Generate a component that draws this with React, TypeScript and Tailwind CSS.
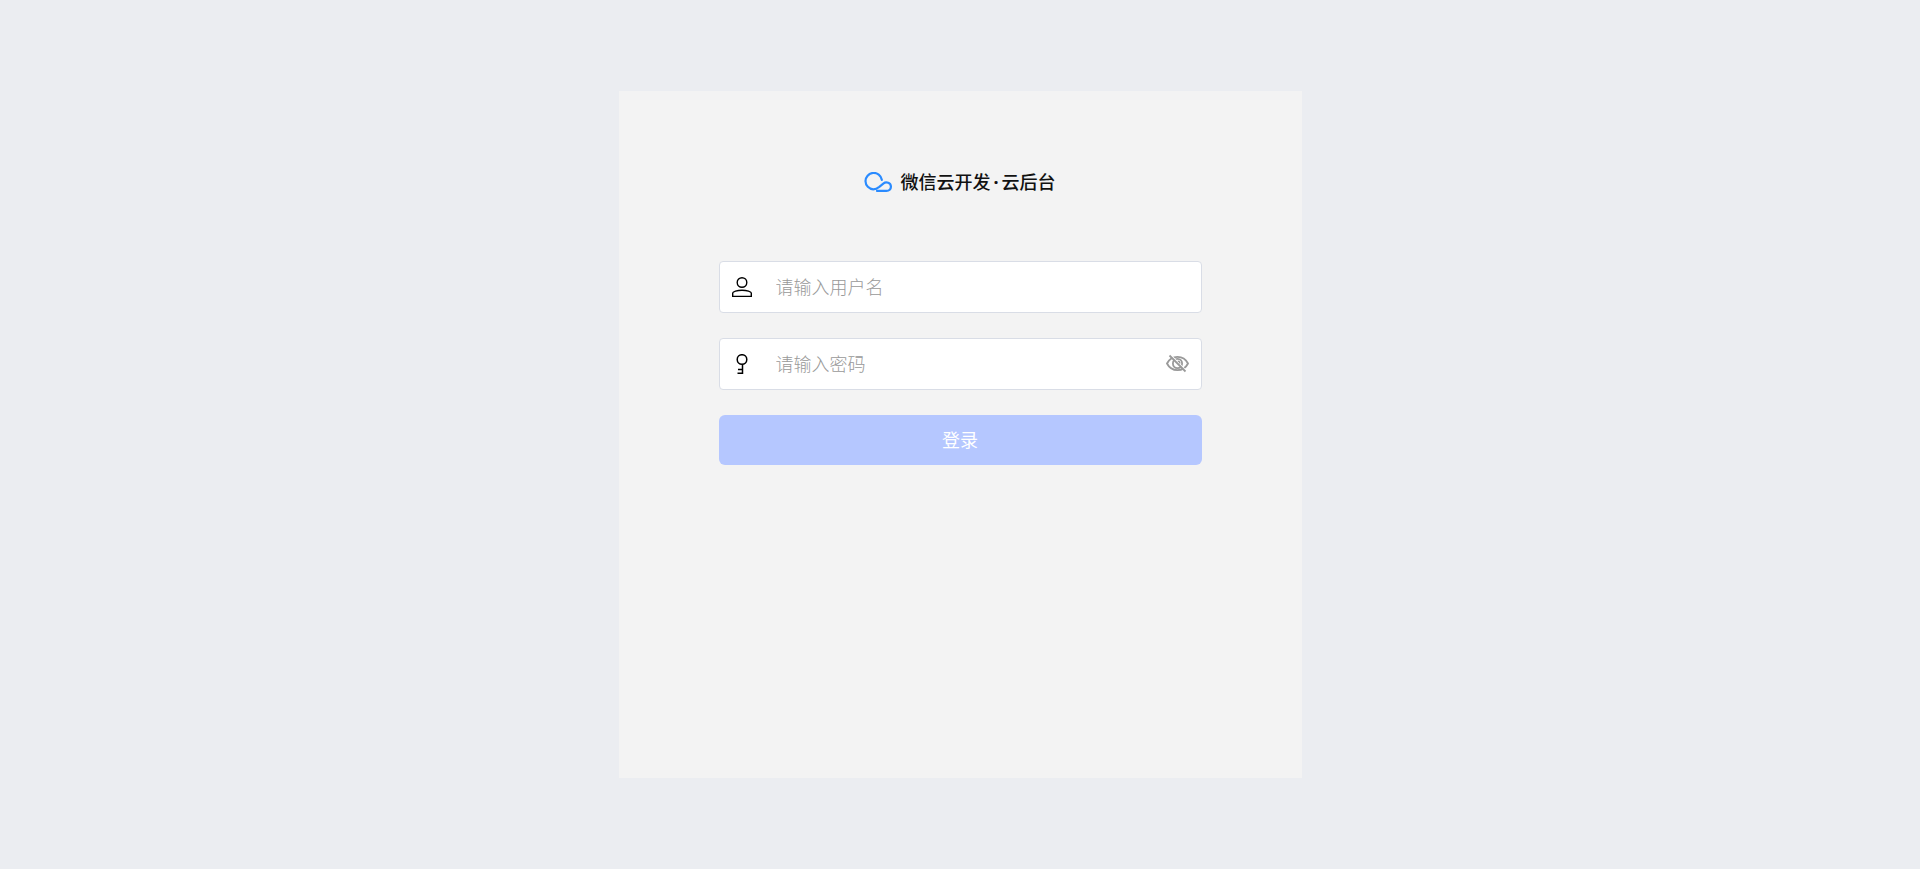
import React, { useState } from 'react';
import { clsx } from 'clsx';

const CloudLogo = () => (
  <svg
    className="h-5 w-7 flex-shrink-0"
    viewBox="0 0 28 20"
    fill="none"
    stroke="#2a8bff"
    strokeWidth="2.2"
    strokeLinecap="round"
    strokeLinejoin="round"
    aria-hidden="true"
  >
    <path d="M17.8 7.8A8.200 8.200 0 1 0 9.300 17.300c2.600 0 4.200-1 6-2.400l4-3.300c3-2.300 7.600-.8 7.600 3 .1 2.700-1.700 4.300-4.500 4.300H13" />
  </svg>
);

const UserIcon = () => (
  <svg
    className="size-5"
    viewBox="0 0 20 20"
    fill="none"
    stroke="#000"
    strokeWidth="1.400"
    aria-hidden="true"
  >
    <circle cx="10" cy="5.500" r="4.800" />
    <path d="M.7 19.500v-3.500c0-1.200 4.300-2.800 9.300-2.800s9.300 1.600 9.300 2.800v3.500z" />
  </svg>
);

const KeyIcon = () => (
  <svg
    className="size-5"
    viewBox="0 0 20 20"
    fill="none"
    stroke="#000"
    strokeWidth="1.500"
    aria-hidden="true"
  >
    <circle cx="10" cy="5.500" r="4.800" />
    <path d="M10.500 10.300v9H5.500M10.500 15.500H6" />
  </svg>
);

const EyeIcon = ({ hidden }: { hidden: boolean }) => (
  <svg
    className="size-6"
    viewBox="0 0 24 24"
    fill="none"
    stroke="#999"
    strokeWidth="1.800"
    aria-hidden="true"
  >
    <path d="M2 11.500C4.200 7.200 8 4.900 12.500 4.900S20.800 7.200 23 11.500C20.800 15.800 17 18.100 12.500 18.100S4.200 15.800 2 11.500z" />
    <circle cx="12.500" cy="11.500" r="4.600" />
    {!hidden && <circle cx="12.500" cy="11.500" r="1.500" />}
    {hidden && (
      <>
        <path d="M6.200 3.500 22 19.300" stroke="#fff" strokeWidth="1.200" />
        <path d="M4.500 3.500 20.500 19.500" />
        <path d="M12.800 9.200A2.300 2.300 0 0 1 14.900 11.500" strokeWidth="1.300" />
      </>
    )}
  </svg>
);

interface FieldProps {
  id: string;
  label: string;
  type?: string;
  value: string;
  icon: React.ReactNode;
  action?: React.ReactNode;
  onChange: (value: string) => void;
}

const Field = ({
  id,
  label,
  type = 'text',
  value,
  icon,
  action,
  onChange,
}: FieldProps) => (
  <div className="flex h-[52px] items-center rounded border border-[#d9dde6] bg-white px-3">
    <label htmlFor={id} className="mr-6 flex-shrink-0">
      {icon}
    </label>
    <input
      id={id}
      type={type}
      value={value}
      placeholder={label}
      aria-label={label}
      onChange={(e) => onChange(e.target.value)}
      className="h-full min-w-0 flex-1 bg-transparent pb-0.5 text-lg font-light text-[#333] outline-none placeholder:text-[#999]"
    />
    {action}
  </div>
);

const App = () => {
  const [username, setUsername] = useState('');
  const [password, setPassword] = useState('');
  const [showPassword, setShowPassword] = useState(false);

  const canSubmit = username !== '' && password !== '';

  return (
    <main className="flex min-h-screen items-center justify-center bg-[#ebedf1] font-['Noto_Sans_CJK_SC',sans-serif]">
      <section className="min-h-[687px] w-full max-w-[683px] bg-[#f3f3f3] px-6 pt-[77px] sm:px-[100px]">
        <h1 className="mb-[65px] flex items-center justify-center gap-2 text-lg font-medium text-[#111]">
          <CloudLogo />
          <span className="font-['Noto_Sans','Noto_Sans_CJK_SC',sans-serif]">
            微信云开发<span className="mx-[3px] font-bold">·</span>云后台
          </span>
        </h1>

        <form
          className="flex flex-col gap-[25px]"
          onSubmit={(e) => e.preventDefault()}
        >
          <Field
            id="username"
            label="请输入用户名"
            value={username}
            icon={<UserIcon />}
            onChange={setUsername}
          />
          <Field
            id="password"
            label="请输入密码"
            type={showPassword ? 'text' : 'password'}
            value={password}
            icon={<KeyIcon />}
            onChange={setPassword}
            action={
              <button
                type="button"
                aria-label="显示密码"
                onClick={() => setShowPassword(!showPassword)}
              >
                <EyeIcon hidden={!showPassword} />
              </button>
            }
          />
          <button
            type="submit"
            disabled={!canSubmit}
            className={clsx(
              'h-[50px] rounded-md pb-0.5 text-lg font-normal text-white',
              canSubmit ? 'bg-[#4d7cff]' : 'bg-[#b5c7ff]',
            )}
          >
            登录
          </button>
        </form>
      </section>
    </main>
  );
};

export default App;
